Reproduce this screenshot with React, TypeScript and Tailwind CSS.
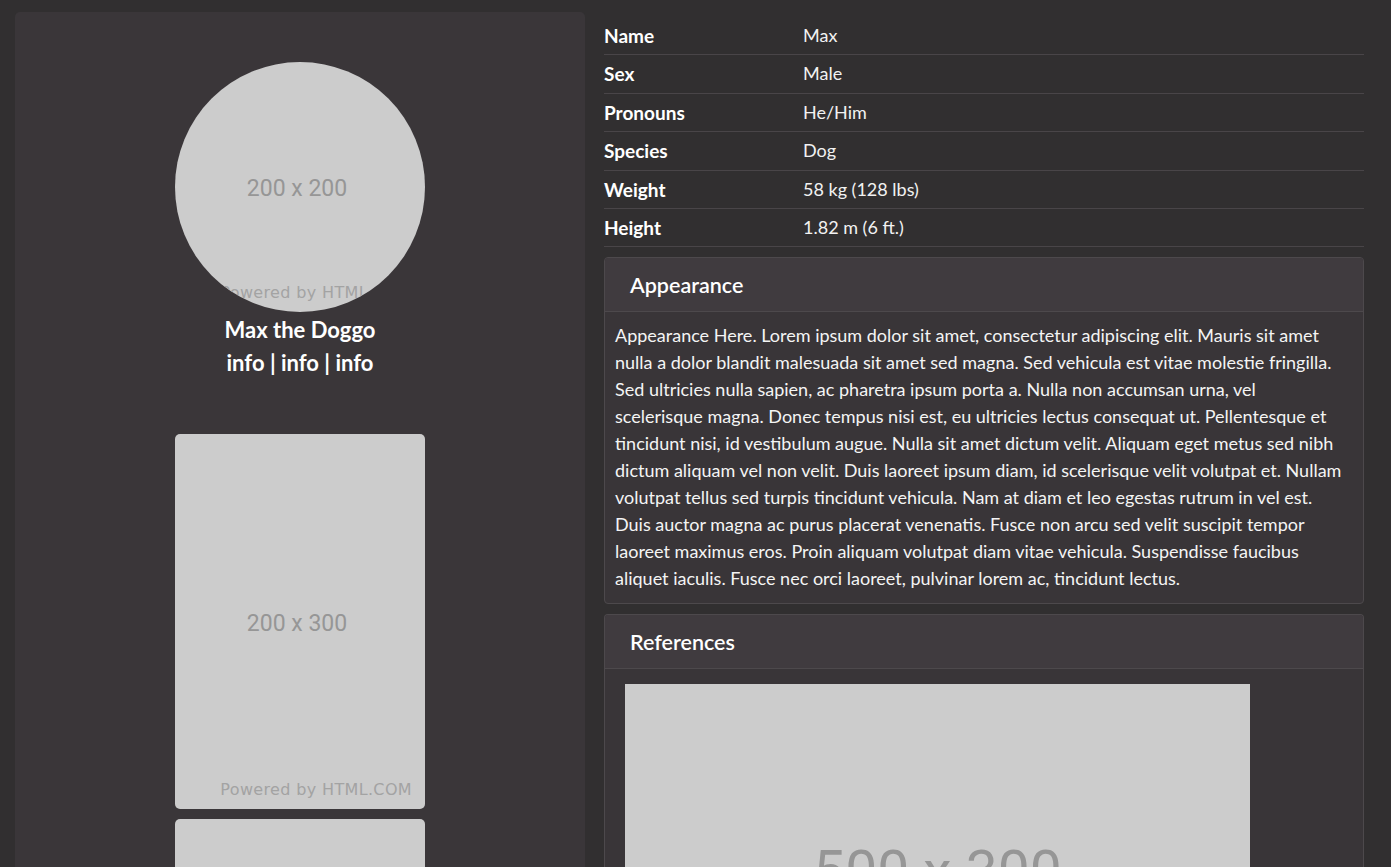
import React from "react";

const rows = [
	["Name", "Max"],
	["Sex", "Male"],
	["Pronouns", "He/Him"],
	["Species", "Dog"],
	["Weight", "58 kg (128 lbs)"],
	["Height", "1.82 m (6 ft.)"],
];

// kept line by line so the wrap matches the original page
const appearance = [
	"Appearance Here. Lorem ipsum dolor sit amet, consectetur adipiscing elit. Mauris sit amet",
	"nulla a dolor blandit malesuada sit amet sed magna. Sed vehicula est vitae molestie fringilla.",
	"Sed ultricies nulla sapien, ac pharetra ipsum porta a. Nulla non accumsan urna, vel",
	"scelerisque magna. Donec tempus nisi est, eu ultricies lectus consequat ut. Pellentesque et",
	"tincidunt nisi, id vestibulum augue. Nulla sit amet dictum velit. Aliquam eget metus sed nibh",
	"dictum aliquam vel non velit. Duis laoreet ipsum diam, id scelerisque velit volutpat et. Nullam",
	"volutpat tellus sed turpis tincidunt vehicula. Nam at diam et leo egestas rutrum in vel est.",
	"Duis auctor magna ac purus placerat venenatis. Fusce non arcu sed velit suscipit tempor",
	"laoreet maximus eros. Proin aliquam volutpat diam vitae vehicula. Suspendisse faucibus",
	"aliquet iaculis. Fusce nec orci laoreet, pulvinar lorem ac, tincidunt lectus.",
];

// grey placeholder picture, like the html.com dummy images
function Placeholder({
	label,
	className,
	big,
}: {
	label: string;
	className: string;
	big?: boolean;
}) {
	return (
		<div
			className={`relative flex shrink-0 items-center justify-center overflow-hidden bg-[#cccccc] ${className}`}
		>
			<span
				className={`font-['Roboto',sans-serif] text-[#969696] ${
					big ? "text-[57px]" : "mt-[5px] mr-[6px] text-[23px]"
				}`}
			>
				{label}
			</span>
			{!big && (
				<span className="absolute right-[13px] bottom-[7px] font-['DejaVu_Sans',sans-serif] text-[16px] tracking-[0.35px] text-[#a3a3a3]">
					Powered by HTML.COM
				</span>
			)}
		</div>
	);
}

export default function App() {
	return (
		<div className="h-[867px] overflow-hidden bg-[#312f30] font-['Lato',sans-serif] text-white">
			<div className="flex gap-[19px] pt-[12px] pl-[15px]">
				{/* left profile column */}
				<div className="flex h-[855px] w-[570px] shrink-0 flex-col items-center overflow-hidden rounded-t-[5px] bg-[#3a3639] pt-[50px]">
					<Placeholder
						label="200 x 200"
						className="h-[250px] w-[250px] rounded-full"
					/>
					<div className="mt-[1px] text-center text-[22px] leading-[33px] font-bold">
						<div>Max the Doggo</div>
						<div>info | info | info</div>
					</div>
					<Placeholder
						label="200 x 300"
						className="mt-[55px] h-[375px] w-[250px] rounded-[5px]"
					/>
					<Placeholder
						label="200 x 300"
						className="mt-[10px] h-[375px] w-[250px] rounded-[5px]"
					/>
				</div>

				{/* right details column */}
				<div className="w-[760px] shrink-0 pt-[5px]">
					<div className="text-[18px]">
						{rows.map(([k, v]) => (
							<div
								key={k}
								className="flex border-b border-[#494548] py-2 leading-[21.4px]"
							>
								<div className="w-[199px] text-[19px] font-bold">{k}</div>
								<div className="text-[#f2f2f2]">{v}</div>
							</div>
						))}
					</div>

					<div className="mt-[10px] overflow-hidden rounded-[4px] border border-[#4d494c] bg-[#393538]">
						<div className="flex h-[54px] items-center border-b border-[#4d494c] bg-[#403b3f] pl-[25px] text-[21.5px] font-semibold">
							Appearance
						</div>
						<div className="px-[10px] pt-[10px] pb-[11px] text-[18px] leading-[27px] text-[#f4f4f4]">
							{appearance.map((line) => (
								<div key={line} className="whitespace-nowrap">
									{line}
								</div>
							))}
						</div>
					</div>

					<div className="mt-[10px] h-[253px] overflow-hidden rounded-t-[4px] border border-b-0 border-[#4d494c] bg-[#393538]">
						<div className="flex h-[54px] items-center border-b border-[#4d494c] bg-[#403b3f] pl-[25px] text-[21.5px] font-semibold">
							References
						</div>
						<div className="pt-[15px] pl-[20px]">
							<Placeholder
								label="500 x 300"
								big
								className="h-[375px] w-[625px]"
							/>
						</div>
					</div>
				</div>
			</div>
		</div>
	);
}
